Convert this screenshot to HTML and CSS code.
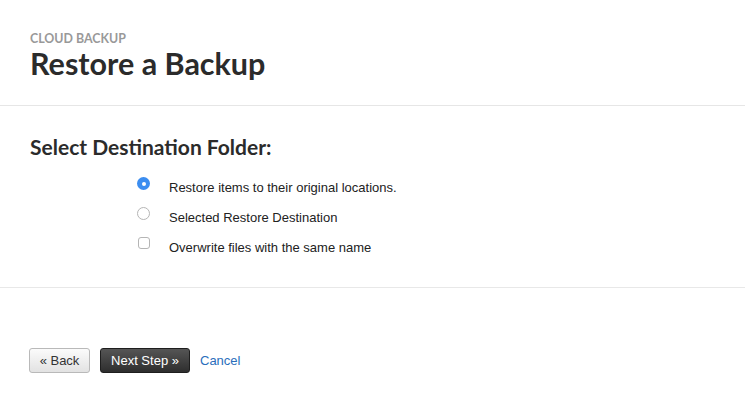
FILE: index.html
```html
<!DOCTYPE html>
<html>
<head>
<meta charset="utf-8">
<link rel="stylesheet" href="styles.css">
</head>
<body>
<header class="page-header">
  <div class="eyebrow">CLOUD BACKUP</div>
  <h1 class="title">Restore a Backup</h1>
</header>
<section class="panel">
  <h2 class="section-title">Select Destination Folder:</h2>
  <div class="options">
    <label class="option">
      <span class="radio checked"></span>
      <span class="option-text">Restore items to their original locations.</span>
    </label>
    <label class="option">
      <span class="radio"></span>
      <span class="option-text">Selected Restore Destination</span>
    </label>
    <label class="option">
      <span class="checkbox"></span>
      <span class="option-text">Overwrite files with the same name</span>
    </label>
  </div>
</section>
<footer class="actions">
  <button class="btn btn-default">« Back</button>
  <button class="btn btn-dark">Next Step »</button>
  <a class="cancel" href="#">Cancel</a>
</footer>
</body>
</html>
```
FILE: styles.css
```css
html, body {
  margin: 0;
  padding: 0;
  background: #fff;
}
body {
  font-family: "Liberation Sans", Arial, sans-serif;
  color: #222;
  width: 745px;
  height: 404px;
  overflow: hidden;
}
.page-header {
  padding: 31px 30px 0;
  border-bottom: 1px solid #e6e6e6;
  box-sizing: border-box;
  height: 106px;
}
.eyebrow {
  font-family: Lato, sans-serif;
  font-weight: 700;
  font-size: 12.4px;
  line-height: 15px;
  color: #999;
}
.title {
  margin: 0;
  font-family: Lato, sans-serif;
  font-weight: 700;
  font-size: 30.5px;
  line-height: 34px;
  color: #2b2b2b;
}
.panel {
  height: 182px;
  box-sizing: border-box;
  border-bottom: 1px solid #e8e8e8;
  padding: 29px 30px 0;
}
.section-title {
  margin: 0;
  font-family: Lato, sans-serif;
  font-weight: 700;
  font-size: 21px;
  line-height: 24px;
  color: #2b2b2b;
}
.options {
  margin-top: 18px;
  padding-left: 107px;
  display: flex;
  flex-direction: column;
  gap: 14px;
}
.option {
  display: flex;
  align-items: flex-start;
  height: 16px;
}
.option-text {
  margin-left: 19px;
  font-size: 13px;
  line-height: 16px;
  color: #222;
  position: relative;
  top: 3px;
}
.radio {
  width: 13px;
  height: 13px;
  box-sizing: border-box;
  border: 1px solid #b5b5b5;
  border-radius: 50%;
  background: #fff;
  display: flex;
  align-items: center;
  justify-content: center;
}
.radio.checked {
  border: none;
  background: #3b8df0;
}
.radio.checked::after {
  content: "";
  width: 4px;
  height: 4px;
  border-radius: 50%;
  background: #fff;
}
.checkbox {
  width: 12px;
  height: 12px;
  box-sizing: border-box;
  border: 1px solid #b5b5b5;
  border-radius: 3px;
  background: #fff;
  margin-left: 1px;
}
.actions {
  padding: 60px 29px 0;
  display: flex;
  align-items: center;
}
.btn {
  font-family: "Liberation Sans", Arial, sans-serif;
  font-size: 13px;
  height: 25px;
  padding: 0;
  border-radius: 3px;
  box-sizing: border-box;
  white-space: nowrap;
  cursor: pointer;
}
.btn-default {
  width: 61px;
  color: #333;
  border: 1px solid #b9b9b9;
  background: linear-gradient(#fbfbfb, #e2e2e2);
}
.btn-dark {
  margin-left: 10px;
  width: 90px;
  color: #fff;
  border: 1px solid #1e1e1e;
  background: linear-gradient(#555, #2e2e2e);
}
.cancel {
  margin-left: 10px;
  font-size: 13px;
  color: #2a6ebb;
  text-decoration: none;
}
```
